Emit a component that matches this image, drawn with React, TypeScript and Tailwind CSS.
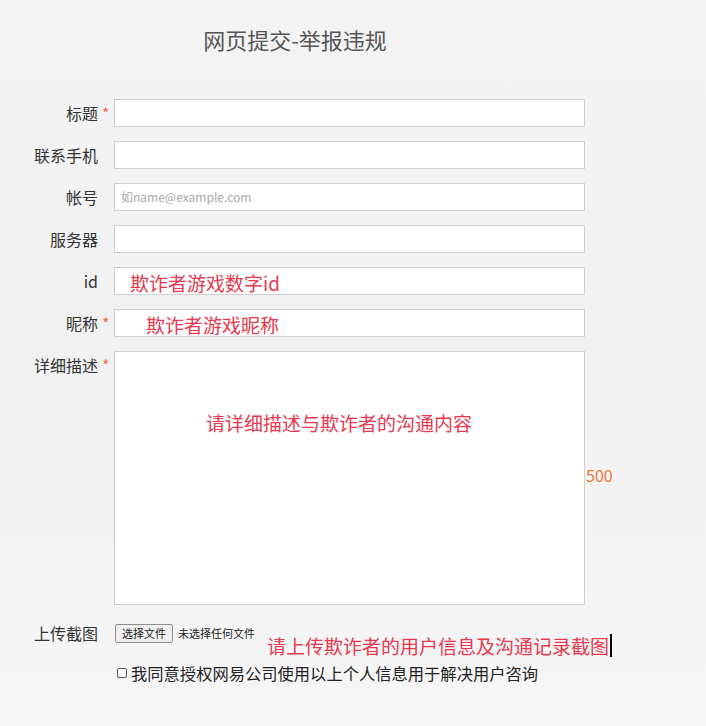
const cjk = "font-['Microsoft_YaHei','Noto_Sans_CJK_SC',sans-serif]"

interface FieldProps {
  label: string
  required?: boolean
  children?: React.ReactNode
}

function Star({ show }: { show?: boolean }) {
  return (
    <div className="w-[16px] h-[28px] pl-[4px] text-[16px] leading-[28px] text-[#e4744f]">{show ? '*' : ''}</div>
  )
}

function Field({ label, required, children }: FieldProps) {
  return (
    <div className="flex items-center h-[28px] mb-[14px]">
      <div className="w-[98px] text-right text-[16px] leading-[28px] text-[#333]">{label}</div>
      <Star show={required} />
      <div className="w-[471px] h-[28px] border border-[#cfcfcf] bg-white flex items-center overflow-hidden">
        {children}
      </div>
    </div>
  )
}

export default function App() {
  return (
    <div className={`${cjk} w-full min-h-[726px] bg-gradient-to-b from-[#f4f4f4] via-[#f1f1f1] to-[#f6f6f6]`}>
      <h1 className="w-[590px] pt-[24px] text-center text-[22px] leading-[30px] text-[#555] font-normal">
        网页提交-举报违规
      </h1>

      <form className="mt-[45px]">
        <Field label="标题" required />
        <Field label="联系手机" />
        <Field label="帐号">
          <span className="pl-[6px] text-[12px] text-[#a9a9a9]">如name@example.com</span>
        </Field>
        <Field label="服务器" />
        <Field label="id">
          <span className="pl-[15px] pt-[3px] text-[19px] leading-[24px] text-[#e8394f]">欺诈者游戏数字id</span>
        </Field>
        <Field label="昵称" required>
          <span className="pl-[31px] pt-[3px] text-[19px] leading-[24px] text-[#e8394f]">欺诈者游戏昵称</span>
        </Field>

        <div className="flex items-start">
          <div className="w-[98px] text-right text-[16px] leading-[28px] text-[#333]">详细描述</div>
          <Star show />
          <div className="w-[471px] h-[254px] border border-[#cfcfcf] bg-white pl-[91px] pt-[59px]">
            <span className="text-[19px] leading-[24px] text-[#e8394f]">请详细描述与欺诈者的沟通内容</span>
          </div>
          <div className="self-center mb-[6px] pl-[1px] text-[16px] text-[#e67a3a]">500</div>
        </div>

        <div className="flex items-start mt-[19px]">
          <div className="w-[98px] text-right text-[16px] leading-[19px] text-[#333]">上传截图</div>
          <div className="w-[16px]" />
          <button
            type="button"
            className="h-[19px] px-[6px] ml-[1px] bg-[#efefef] border border-[#8f8f8f] rounded-[2px] text-[11px] leading-[17px] text-[#222]"
          >
            选择文件
          </button>
          <span className="ml-[5px] text-[11px] leading-[19px] text-[#222]">未选择任何文件</span>
          <span className="ml-[12px] mt-[10px] text-[19px] leading-[24px] text-[#e8394f]">请上传欺诈者的用户信息及沟通记录截图</span>
          <span className="ml-[1px] mt-[10px] w-[2px] h-[23px] bg-black" />
        </div>

        <div className="flex items-center ml-[117px] mt-[5px] h-[20px]">
          <span className="w-[10px] h-[10px] border border-[#555] rounded-[2px] bg-white" />
          <span className="ml-[4px] text-[16.3px] leading-[20px] text-[#222]">我同意授权网易公司使用以上个人信息用于解决用户咨询</span>
        </div>
      </form>
    </div>
  )
}
